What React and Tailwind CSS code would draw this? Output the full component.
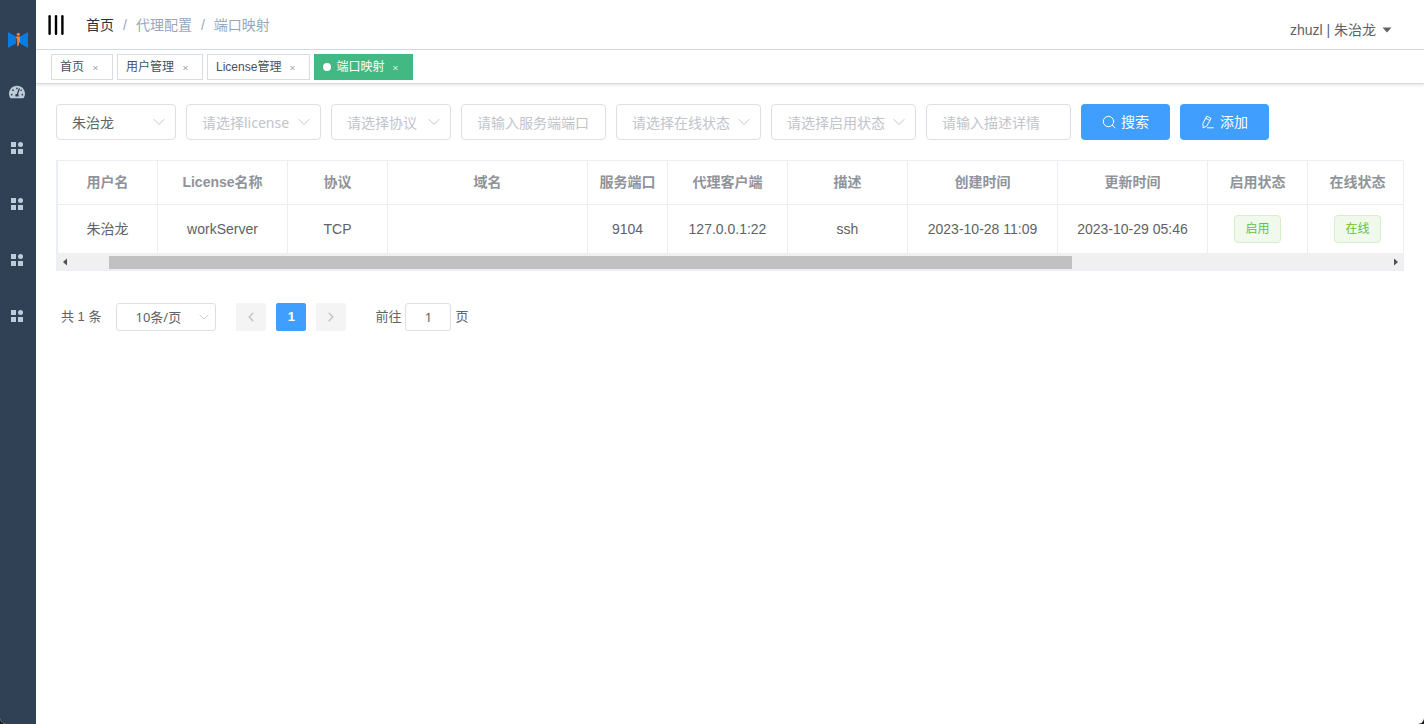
import { FaTachometerAlt } from "react-icons/fa";

const tags = [
  { title: "首页" },
  { title: "用户管理" },
  { title: "License管理" },
  { title: "端口映射", active: true },
];

const filters = [
  { type: "select", label: "用户", value: "朱治龙", width: "w-[120px]" },
  { type: "select", label: "license", placeholder: "请选择license", width: "w-[135px]" },
  { type: "select", label: "协议", placeholder: "请选择协议", width: "w-[120px]" },
  { type: "input", label: "服务端端口", placeholder: "请输入服务端端口", width: "w-[145px]" },
  { type: "select", label: "在线状态", placeholder: "请选择在线状态", width: "w-[145px]" },
  { type: "select", label: "启用状态", placeholder: "请选择启用状态", width: "w-[145px]" },
  { type: "input", label: "描述详情", placeholder: "请输入描述详情", width: "w-[145px]" },
];

const columns = [
  { prop: "userName", label: "用户名", width: 100 },
  { prop: "licenseName", label: "License名称", width: 130 },
  { prop: "protocol", label: "协议", width: 100 },
  { prop: "domain", label: "域名", width: 200 },
  { prop: "serverPort", label: "服务端口", width: 80 },
  { prop: "client", label: "代理客户端", width: 120 },
  { prop: "description", label: "描述", width: 120 },
  { prop: "createTime", label: "创建时间", width: 150 },
  { prop: "updateTime", label: "更新时间", width: 150 },
  { prop: "enable", label: "启用状态", width: 100, tag: true },
  { prop: "online", label: "在线状态", width: 100, tag: true },
];

const rows = [
  {
    userName: "朱治龙",
    licenseName: "workServer",
    protocol: "TCP",
    domain: "",
    serverPort: "9104",
    client: "127.0.0.1:22",
    description: "ssh",
    createTime: "2023-10-28 11:09",
    updateTime: "2023-10-29 05:46",
    enable: "启用",
    online: "在线",
  },
];

const Logo = () => (
  <svg className="h-5 w-5" viewBox="0 0 20 20">
    <path d="M0 2l8 4.5v7L0 18z" fill="#0a7be0" />
    <path d="M20 2l-8 4.5v7l8 4.5z" fill="#0a7be0" />
    <circle cx="10.3" cy="4.3" r="1.6" fill="#f08040" />
    <path d="M8 6.6h4v5.6l-1 .6v2.2l-1.8 1.5V12l-.4-3.6-.8-.4z" fill="#f08040" />
  </svg>
);

const MenuIcon = () => (
  <svg className="h-3.5 w-3.5" viewBox="0 0 14 14" fill="currentColor">
    <rect x="1" y="1" width="5" height="5" />
    <circle cx="10.5" cy="3.5" r="2.5" />
    <rect x="1" y="8" width="5" height="5" />
    <rect x="8" y="8" width="5" height="5" />
  </svg>
);

const Chevron = ({ className }) => (
  <svg
    className={className}
    viewBox="0 0 12 8"
    fill="none"
    stroke="currentColor"
    strokeLinecap="round"
    strokeLinejoin="round"
  >
    <path d="M1 1.5l5 5 5-5" />
  </svg>
);

const SearchIcon = () => (
  <svg className="h-3.5 w-3.5" viewBox="0 0 14 14" fill="none" stroke="currentColor" strokeLinecap="round">
    <circle cx="6.5" cy="6.5" r="5.2" />
    <path d="M10.3 10.3l2.7 2.5" />
  </svg>
);

const EditIcon = () => (
  <svg
    className="h-3.5 w-3.5"
    viewBox="0 0 14 14"
    fill="none"
    stroke="currentColor"
    strokeLinecap="round"
    strokeLinejoin="round"
  >
    <path d="M6.2 1.3l3.9 2.1-4.4 7.8-3.6 1.6-.2-4z" />
    <path d="M5 3.4l3.9 2.1M6.4 12.8h6" />
  </svg>
);

const Sidebar = () => (
  <aside className="flex w-9 shrink-0 flex-col bg-[#304156] text-[#bfcbd9]">
    <a href="#" aria-label="Logo" className="flex h-16 items-end justify-center pb-3.5">
      <Logo />
    </a>
    <nav className="flex flex-col pr-0.5">
      <a href="#" aria-label="Dashboard" className="flex h-14 items-center justify-center">
        <FaTachometerAlt className="size-4" />
      </a>
      {[1, 2, 3, 4].map((n) => (
        <a key={n} href="#" aria-label={`Menu ${n}`} className="flex h-14 items-center justify-center">
          <MenuIcon />
        </a>
      ))}
    </nav>
  </aside>
);

const Navbar = () => (
  <header className="flex h-[50px] items-center justify-between border-b border-[#d8dce5] pr-8 pl-3">
    <div className="flex items-center">
      <button type="button" aria-label="Toggle menu" className="mr-[22px]">
        <svg className="h-5 w-4" viewBox="0 0 16 20" fill="#000">
          <rect x="0.4" y="0" width="2.4" height="20" rx="1.2" />
          <rect x="6.8" y="0" width="2.4" height="20" rx="1.2" />
          <rect x="13.2" y="0" width="2.4" height="20" rx="1.2" />
        </svg>
      </button>
      <nav className="flex gap-[9px] text-sm text-[#97a8be]">
        <a href="#" className="text-[#303133]">首页</a>
        <span>/</span>
        <span>代理配置</span>
        <span>/</span>
        <span>端口映射</span>
      </nav>
    </div>
    <button type="button" className="mt-2.5 flex items-center gap-1.5 text-sm text-[#606266]">
      zhuzl | 朱治龙
      <svg className="h-1.5 w-2.5" viewBox="0 0 10 6" fill="currentColor">
        <path d="M0.5 0.5h9L5 5.5z" />
      </svg>
    </button>
  </header>
);

const TagsView = () => (
  <div className="flex h-[34px] items-center gap-1 border-b border-[#d8dce5] px-[15px] shadow-[0_1px_3px_0_rgba(0,0,0,0.12)]">
    {tags.map((tag) => (
      <a
        key={tag.title}
        href="#"
        className={
          tag.active
            ? "flex h-[26px] items-center border border-[#42b983] bg-[#42b983] px-2 text-xs text-white"
            : "flex h-[26px] items-center border border-[#d8dce5] bg-white px-2 text-xs text-[#495060]"
        }
      >
        {tag.active && <span className="mr-[5px] size-2 rounded-full bg-white" />}
        {tag.title}
        <svg
          className={tag.active ? "ml-1 size-4 text-white" : "ml-1 size-4 text-[#8a909c]"}
          viewBox="0 0 16 16"
          stroke="currentColor"
          strokeWidth="0.9"
        >
          <path d="M5.5 7l4 4M9.5 7l-4 4" />
        </svg>
      </a>
    ))}
  </div>
);

const Filter = ({ type, label, placeholder, value, width }) => {
  if (type === "input") {
    return (
      <input
        type="text"
        aria-label={label}
        placeholder={placeholder}
        className={`${width} h-9 rounded border border-[#dcdfe6] px-[15px] font-['Noto_Sans','Noto_Sans_CJK_SC',sans-serif] text-sm text-[#606266] outline-none placeholder:text-[#c0c4cc]`}
      />
    );
  }
  return (
    <div className={`${width} relative`}>
      <select
        aria-label={label}
        className={`${
          value ? "text-[#606266]" : "text-[#c0c4cc]"
        } h-9 w-full appearance-none rounded border border-[#dcdfe6] bg-white pt-0.5 pl-[15px] font-['Noto_Sans','Noto_Sans_CJK_SC',sans-serif] text-sm outline-none`}
      >
        <option>{value || placeholder}</option>
      </select>
      <Chevron className="pointer-events-none absolute top-3.5 right-[11px] h-2 w-3 text-[#c0c4cc]" />
    </div>
  );
};

const FilterBar = () => (
  <form className="flex flex-wrap gap-2.5">
    {filters.map((filter) => (
      <Filter key={filter.label} {...filter} />
    ))}
    <button
      type="button"
      className="flex h-9 w-[89px] items-center justify-center gap-[5px] rounded bg-[#409eff] text-sm text-white"
    >
      <SearchIcon />
      搜索
    </button>
    <button
      type="button"
      className="flex h-9 w-[89px] items-center justify-center gap-[5px] rounded bg-[#409eff] text-sm text-white"
    >
      <EditIcon />
      添加
    </button>
  </form>
);

const PortTable = () => (
  <div className="mt-5 border border-l-2 border-[#ebeef5]">
    <div className="overflow-hidden">
      <table className="w-[1350px] table-fixed border-separate border-spacing-0 text-center text-sm text-[#606266]">
        <colgroup>
          {columns.map((col) => (
            <col key={col.prop} style={{ width: col.width }} />
          ))}
        </colgroup>
        <thead>
          <tr className="h-11 text-[#909399]">
            {columns.map((col) => (
              <th key={col.prop} className="border-r border-b border-[#ebeef5] p-0 pb-px font-bold">
                {col.label}
              </th>
            ))}
          </tr>
        </thead>
        <tbody>
          {rows.map((row) => (
            <tr key={row.client} className="h-12">
              {columns.map((col) => (
                <td key={col.prop} className="border-r border-[#ebeef5] p-0">
                  {col.tag ? (
                    <span className="inline-block h-7 rounded border border-[#d5efc8] bg-[#f0f9eb] px-[10px] align-middle text-xs leading-[26px] text-[#67c23a]">
                      {row[col.prop]}
                    </span>
                  ) : (
                    row[col.prop]
                  )}
                </td>
              ))}
            </tr>
          ))}
        </tbody>
      </table>
    </div>
    {/* horizontal scrollbar */}
    <div className="flex h-[17px] items-center justify-between bg-[#f0f0f0] px-1 text-[#505050]">
      <svg className="h-2 w-1.5" viewBox="0 0 6 8" fill="currentColor">
        <path d="M5 0.5v7L1 4z" />
      </svg>
      <div className="flex flex-1 pl-[41px]">
        <div className="mt-0.5 h-[13px] w-3/4 bg-[#c1c1c1]" />
      </div>
      <svg className="h-2 w-1.5" viewBox="0 0 6 8" fill="currentColor">
        <path d="M1 0.5v7L5 4z" />
      </svg>
    </div>
  </div>
);

const Pagination = () => (
  <div className="mt-8 flex h-7 items-center px-[5px] text-[13px] text-[#606266]">
    <span>共 1 条</span>
    <div className="relative ml-[15px] w-[100px]">
      <select
        aria-label="每页条数"
        className="h-7 w-full appearance-none rounded-[3px] border border-[#dcdfe6] bg-white pt-0.5 pl-[18px] font-['Noto_Sans','Noto_Sans_CJK_SC',sans-serif] outline-none"
      >
        <option>10条/页</option>
      </select>
      <Chevron className="pointer-events-none absolute top-2.5 right-[7px] h-2 w-2.5 text-[#c0c4cc]" />
    </div>
    <div className="ml-5 flex gap-2.5">
      <button
        type="button"
        aria-label="上一页"
        disabled
        className="flex h-7 w-[30px] items-center justify-center rounded-xs bg-[#f4f4f5] text-[#c0c4cc]"
      >
        <Chevron className="h-1.5 w-2.5 rotate-90 stroke-2" />
      </button>
      <button type="button" className="h-7 w-[30px] rounded-xs bg-[#409eff] font-bold text-white">
        1
      </button>
      <button
        type="button"
        aria-label="下一页"
        disabled
        className="flex h-7 w-[30px] items-center justify-center rounded-xs bg-[#f4f4f5] text-[#c0c4cc]"
      >
        <Chevron className="h-1.5 w-2.5 -rotate-90 stroke-2" />
      </button>
    </div>
    <label className="ml-[29px] flex items-center gap-1">
      前往
      <input
        type="text"
        defaultValue="1"
        className="h-7 w-[46px] rounded-[3px] border border-[#dcdfe6] text-center font-['Noto_Sans','Noto_Sans_CJK_SC',sans-serif] outline-none"
      />
      页
    </label>
  </div>
);

const App = () => {
  return (
    <div className="bg-[#1a1a1a] font-['Liberation_Sans','Noto_Sans_CJK_SC',sans-serif]">
      <div className="flex min-h-screen overflow-hidden rounded-b-md bg-white">
        <Sidebar />
        <div className="min-w-0 flex-1">
          <Navbar />
          <TagsView />
          <main className="p-5">
            <FilterBar />
            <PortTable />
            <Pagination />
          </main>
        </div>
      </div>
    </div>
  );
};

export default App;
